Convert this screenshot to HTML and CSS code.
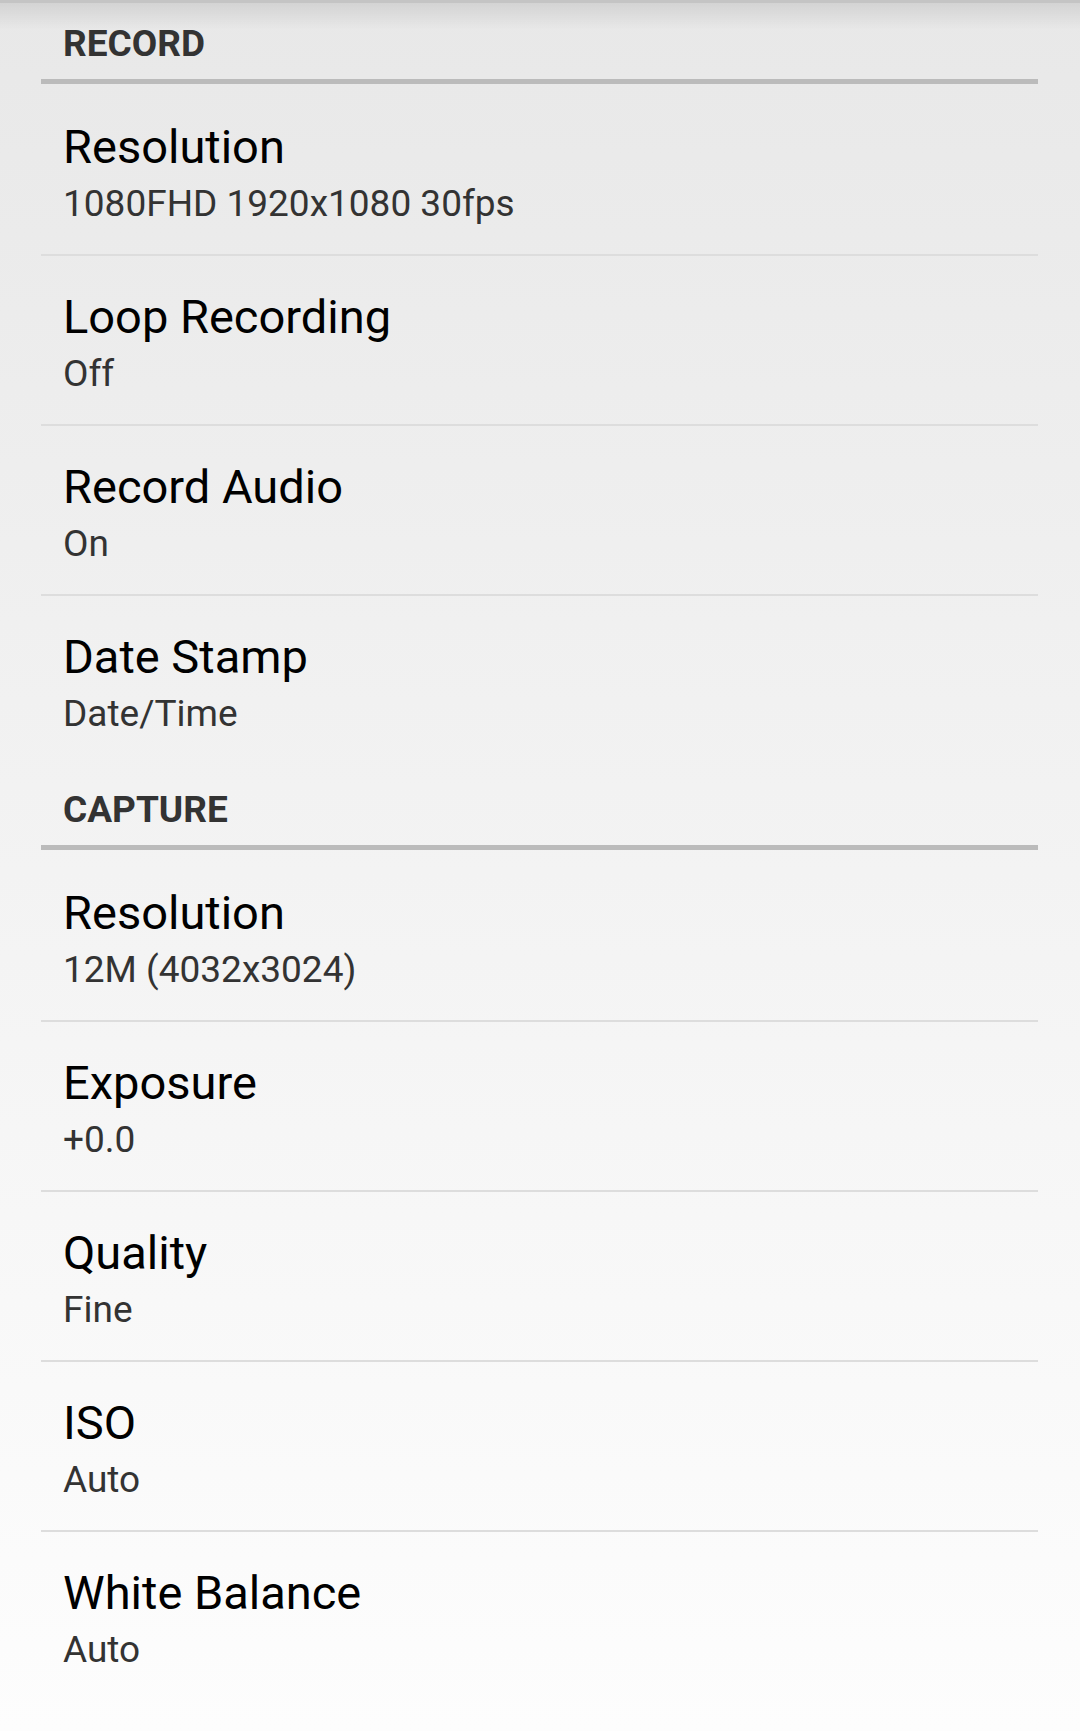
FILE: index.html
```html
<!DOCTYPE html>
<html lang="en">
<head>
<meta charset="utf-8">
<title>Settings</title>
<link rel="stylesheet" href="styles.css">
</head>
<body>
<main class="settings">
  <section class="group">
    <h2 class="group-title">RECORD</h2>
    <div class="row"><div class="title">Resolution</div><div class="value">1080FHD 1920x1080 30fps</div></div>
    <div class="row"><div class="title">Loop Recording</div><div class="value">Off</div></div>
    <div class="row"><div class="title">Record Audio</div><div class="value">On</div></div>
    <div class="row last"><div class="title">Date Stamp</div><div class="value">Date/Time</div></div>
  </section>
  <section class="group">
    <h2 class="group-title">CAPTURE</h2>
    <div class="row"><div class="title">Resolution</div><div class="value">12M (4032x3024)</div></div>
    <div class="row"><div class="title">Exposure</div><div class="value">+0.0</div></div>
    <div class="row"><div class="title">Quality</div><div class="value">Fine</div></div>
    <div class="row"><div class="title">ISO</div><div class="value">Auto</div></div>
    <div class="row last"><div class="title">White Balance</div><div class="value">Auto</div></div>
  </section>
</main>
</body>
</html>
```
FILE: styles.css
```css
html, body {
  margin: 0;
  padding: 0;
}
body {
  width: 1080px;
  height: 1731px;
  overflow: hidden;
  font-family: Roboto, "Noto Sans", sans-serif;
  background:
    linear-gradient(to bottom, #c4c4c4 0, #c4c4c4 3px, rgba(0,0,0,0.09) 3px, rgba(0,0,0,0) 30px),
    linear-gradient(to bottom, #e8e8e8 0, #f1f1f1 700px, #fdfdfd 1731px);
}
.settings {
  margin: 0 42px 0 41px;
}
.group-title {
  margin: 0 0 2px 0;
  padding: 26px 0 0 22px;
  height: 53px;
  line-height: 36px;
  font-size: 37px;
  font-weight: 700;
  color: #333333;
  border-bottom: 5px solid #bbbbbb;
}
.row {
  height: 168px;
  box-sizing: content-box;
  padding: 0 0 0 22px;
  border-bottom: 2px solid #dddddd;
}
.row.last {
  border-bottom-color: transparent;
}
.title {
  padding-top: 35px;
  font-size: 47px;
  line-height: 52px;
  color: #000000;
}
.value {
  margin-top: 5px;
  font-size: 37px;
  line-height: 52px;
  color: #333333;
}
```
